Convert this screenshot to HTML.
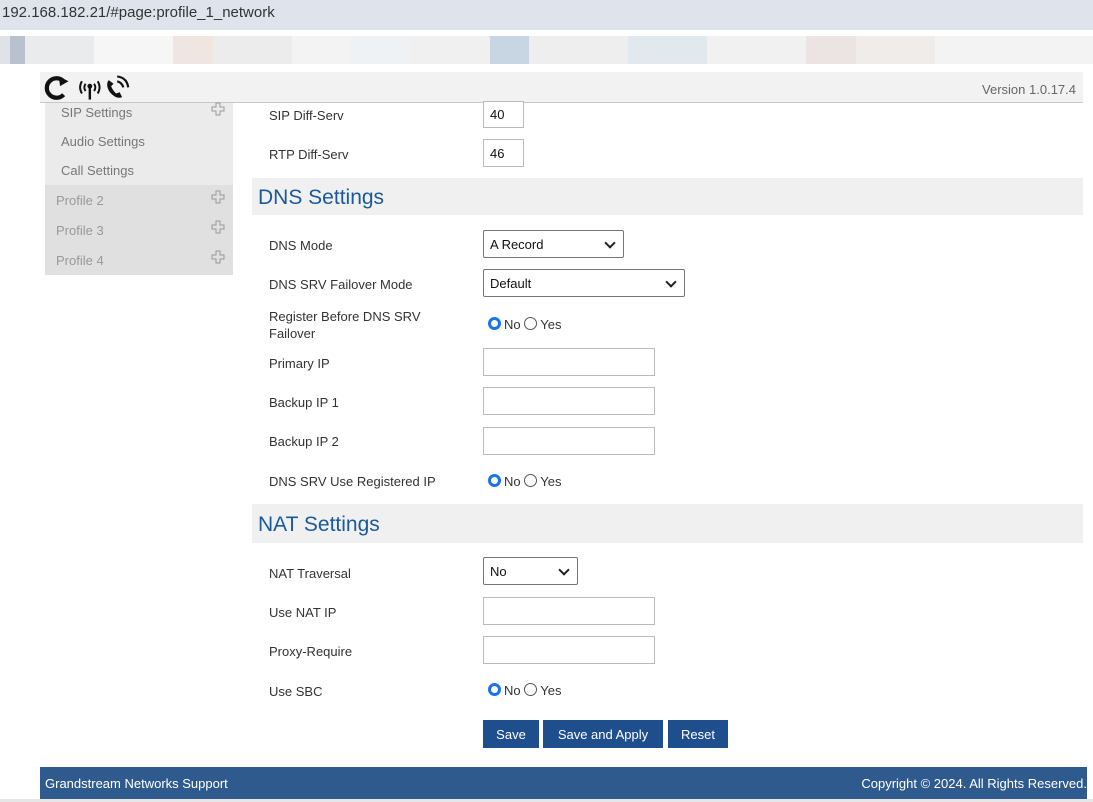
<!DOCTYPE html>
<html><head><meta charset="utf-8"><style>
*{box-sizing:border-box;margin:0;padding:0}
body{width:1093px;height:802px;background:#fff;font-family:"Liberation Sans",Arial,sans-serif;position:relative;overflow:hidden;font-size:13px;color:#333}
.abs{position:absolute}
.url{left:0;top:0;width:1093px;height:30px;background:#dfe4ec;font-size:15px;color:#333;padding:4px 0 0 2px}
.blur{top:36px;height:28px;display:flex;left:0;width:1093px}
.blur div{height:100%}
.hdr{left:40px;top:72px;width:1043px;height:31px;background:#f2f2f2;border-bottom:1px solid #c8c8c8}
.ver{right:7px;top:10px;font-size:13px;color:#666}
.side{left:45px;width:188px;color:#777;font-size:13px}
.lbl{left:269px;font-size:13px;color:#333}
.inp{left:483px;height:28px;border:1px solid #bbb;background:#fff;font-size:13px;padding:6px 6px;color:#111}
.sel{border:1px solid #767676;border-radius:2px}
.sel::after{content:"";position:absolute;right:9px;top:8px;width:6px;height:6px;border-right:2px solid #222;border-bottom:2px solid #222;transform:rotate(45deg)}
.sec{left:252px;width:831px;background:#f0f0f0;font-size:21px;color:#1a5a9a;padding-left:6px}
.rad{left:488px;font-size:13px;color:#333}
.r{display:inline-block;width:13px;height:13px;border-radius:50%;border:1px solid #555;vertical-align:-1px;margin-right:3px}
.r.on{border:3.5px solid #1a73e8;background:#fff}
.btn{top:720px;height:28px;background:#1f4e8c;color:#fff;font-size:13px;text-align:center;line-height:29px}
.plus{right:8px;top:-3px;width:14px;height:14px}
</style></head><body>
<div class="abs url">192.168.182.21/#page:profile_1_network</div>
<div class="abs blur">
<div style="width:10px;background:#dfe2e6"></div><div style="width:15px;background:#b9c2cc"></div><div style="width:70px;background:#eaebec"></div><div style="width:80px;background:#f6f6f6"></div><div style="width:40px;background:#efe6e2"></div><div style="width:80px;background:#ececec"></div><div style="width:60px;background:#f3f3f3"></div><div style="width:60px;background:#eef2f4"></div><div style="width:80px;background:#f0f0f0"></div><div style="width:40px;background:#c8d6e3"></div><div style="width:100px;background:#eeeeee"></div><div style="width:80px;background:#e1e9ef"></div><div style="width:100px;background:#f1f1f1"></div><div style="width:50px;background:#ebe4e2"></div><div style="width:80px;background:#f0ecea"></div><div style="width:160px;background:#f3f3f3"></div>
</div>
<div class="abs hdr">
<svg class="abs" style="left:2px;top:2px" width="92" height="28" viewBox="0 0 74 23">
<path d="M17 6 A8 8 0 1 0 17 17" fill="none" stroke="#111" stroke-width="3.5"/><path d="M13 2 L21 6 L14 10 Z" fill="#111"/>
<path d="M32 6 Q29 11 32 16 M35 8 Q33 11 35 14 M45 6 Q48 11 45 16 M42 8 Q44 11 42 14" fill="none" stroke="#111" stroke-width="1.6"/>
<circle cx="38.5" cy="10" r="2" fill="#111"/><rect x="37.5" y="10" width="2" height="11" fill="#111"/>
<path d="M54 5 Q51 9 55 15 Q60 21 65 19 L63 15 L60 16 Q57 13 56 10 L58 8 Z" fill="#111"/>
<path d="M61 6 Q65 7 66 11 M61 2 Q69 3 70 11" fill="none" stroke="#111" stroke-width="1.8"/>
</svg>
<div class="abs ver">Version 1.0.17.4</div>
</div>
<div class="abs side" style="top:103px;height:82px;background:#ebebeb"></div>
<div class="abs side" style="top:185px;height:90px;background:#e0e0e0"></div>
<div class="abs side" style="top:105px;left:61px;width:172px">SIP Settings<svg class="abs plus" viewBox="0 0 14 14"><path d="M5 1H9V5H13V9H9V13H5V9H1V5H5Z" fill="none" stroke="#999"/></svg></div>
<div class="abs side" style="top:134px;left:61px">Audio Settings</div>
<div class="abs side" style="top:163px;left:61px">Call Settings</div>
<div class="abs side" style="top:193px;left:56px;width:177px;color:#999">Profile 2<svg class="abs plus" viewBox="0 0 14 14"><path d="M5 1H9V5H13V9H9V13H5V9H1V5H5Z" fill="none" stroke="#999"/></svg></div>
<div class="abs side" style="top:223px;left:56px;width:177px;color:#999">Profile 3<svg class="abs plus" viewBox="0 0 14 14"><path d="M5 1H9V5H13V9H9V13H5V9H1V5H5Z" fill="none" stroke="#999"/></svg></div>
<div class="abs side" style="top:253px;left:56px;width:177px;color:#999">Profile 4<svg class="abs plus" viewBox="0 0 14 14"><path d="M5 1H9V5H13V9H9V13H5V9H1V5H5Z" fill="none" stroke="#999"/></svg></div>

<div class="abs lbl" style="top:108px">SIP Diff-Serv</div>
<div class="abs inp" style="top:101px;width:41px;height:27px;padding-top:5px">40</div>
<div class="abs lbl" style="top:147px">RTP Diff-Serv</div>
<div class="abs inp" style="top:139px;width:41px">46</div>

<div class="abs sec" style="top:178px;height:37px;line-height:40px">DNS Settings</div>
<div class="abs lbl" style="top:238px">DNS Mode</div>
<div class="abs inp sel" style="top:230px;width:141px">A Record</div>
<div class="abs lbl" style="top:277px">DNS SRV Failover Mode</div>
<div class="abs inp sel" style="top:269px;width:202px">Default</div>
<div class="abs lbl" style="top:308px;line-height:17px">Register Before DNS SRV<br>Failover</div>
<div class="abs rad" style="top:317px"><span class="r on"></span>No <span class="r"></span>Yes</div>
<div class="abs lbl" style="top:356px">Primary IP</div>
<div class="abs inp" style="top:348px;width:172px"></div>
<div class="abs lbl" style="top:395px">Backup IP 1</div>
<div class="abs inp" style="top:387px;width:172px"></div>
<div class="abs lbl" style="top:434px">Backup IP 2</div>
<div class="abs inp" style="top:427px;width:172px"></div>
<div class="abs lbl" style="top:474px">DNS SRV Use Registered IP</div>
<div class="abs rad" style="top:474px"><span class="r on"></span>No <span class="r"></span>Yes</div>

<div class="abs sec" style="top:504px;height:39px;line-height:42px">NAT Settings</div>
<div class="abs lbl" style="top:566px">NAT Traversal</div>
<div class="abs inp sel" style="top:557px;width:95px">No</div>
<div class="abs lbl" style="top:605px">Use NAT IP</div>
<div class="abs inp" style="top:597px;width:172px"></div>
<div class="abs lbl" style="top:644px">Proxy-Require</div>
<div class="abs inp" style="top:636px;width:172px"></div>
<div class="abs lbl" style="top:684px">Use SBC</div>
<div class="abs rad" style="top:683px"><span class="r on"></span>No <span class="r"></span>Yes</div>

<div class="abs btn" style="left:483px;width:56px">Save</div>
<div class="abs btn" style="left:543px;width:120px">Save and Apply</div>
<div class="abs btn" style="left:668px;width:60px">Reset</div>

<div class="abs" style="left:40px;top:767px;width:1047px;height:32px;background:#2e5a8e;color:#fff;font-size:13px">
<span class="abs" style="left:5px;top:9px">Grandstream Networks Support</span>
<span class="abs" style="right:0;top:9px">Copyright © 2024. All Rights Reserved.</span>
</div>
<div class="abs" style="left:0;top:799px;width:1093px;height:3px;background:#e6e6e6"></div>
</body></html>
